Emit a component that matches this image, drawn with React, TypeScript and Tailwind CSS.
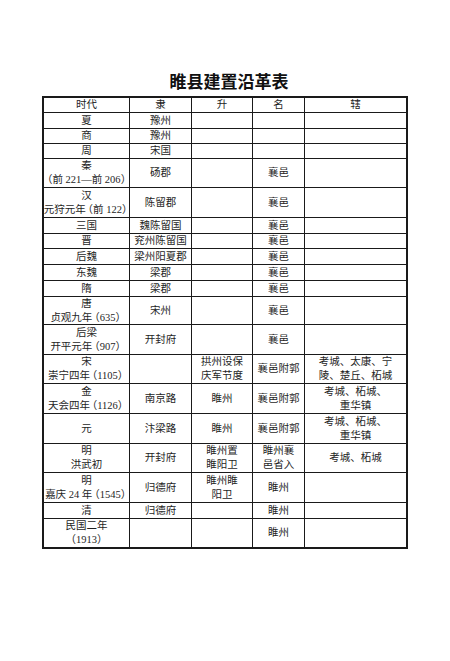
import React from "react";

type Cell = string[];
type Row = { h: number; c: Cell[] };

const rows: Row[] = [
  { h: 16, c: [["夏"], ["豫州"], [], [], []] },
  { h: 15, c: [["商"], ["豫州"], [], [], []] },
  { h: 15, c: [["周"], ["宋国"], [], [], []] },
  { h: 29, c: [["秦", "（前 221—前 206）"], ["砀郡"], [], ["襄邑"], []] },
  { h: 30, c: [["汉", "元狩元年（前 122）"], ["陈留郡"], [], ["襄邑"], []] },
  { h: 16, c: [["三国"], ["魏陈留国"], [], ["襄邑"], []] },
  { h: 15, c: [["晋"], ["兖州陈留国"], [], ["襄邑"], []] },
  { h: 16, c: [["后魏"], ["梁州阳夏郡"], [], ["襄邑"], []] },
  { h: 16, c: [["东魏"], ["梁郡"], [], ["襄邑"], []] },
  { h: 16, c: [["隋"], ["梁郡"], [], ["襄邑"], []] },
  { h: 28, c: [["唐", "贞观九年（635）"], ["宋州"], [], ["襄邑"], []] },
  { h: 30, c: [["后梁", "开平元年（907）"], ["开封府"], [], ["襄邑"], []] },
  {
    h: 29,
    c: [
      ["宋", "崇宁四年（1105）"],
      [],
      ["拱州设保", "庆军节度"],
      ["襄邑附郭"],
      ["考城、太康、宁", "陵、楚丘、柘城"],
    ],
  },
  {
    h: 30,
    c: [["金", "天会四年（1126）"], ["南京路"], ["睢州"], ["襄邑附郭"], ["考城、柘城、", "重华镇"]],
  },
  { h: 30, c: [["元"], ["汴梁路"], ["睢州"], ["襄邑附郭"], ["考城、柘城、", "重华镇"]] },
  {
    h: 29,
    c: [["明", "洪武初"], ["开封府"], ["睢州置", "睢阳卫"], ["睢州襄", "邑省入"], ["考城、柘城"]],
  },
  { h: 30, c: [["明", "嘉庆 24 年（1545）"], ["归德府"], ["睢州睢", "阳卫"], ["睢州"], []] },
  { h: 16, c: [["清"], ["归德府"], [], ["睢州"], []] },
  { h: 28, c: [["民国二年", "（1913）"], [], [], ["睢州"], []] },
];

function Txt({ s }: { s: string }) {
  const parts: React.ReactNode[] = [];
  let buf = "";
  let k = 0;
  for (const ch of s) {
    if (ch === "（" || ch === "）") {
      if (buf) parts.push(<span key={k++}>{buf}</span>);
      buf = "";
      parts.push(
        <span
          key={k++}
          className={`[font-feature-settings:'halt'] ${ch === "（" ? "ml-[2px]" : "mr-[2px]"}`}
        >
          {ch}
        </span>
      );
    } else buf += ch;
  }
  if (buf) parts.push(<span key={k++}>{buf}</span>);
  return <div className="whitespace-nowrap">{parts}</div>;
}

const cols = "grid grid-cols-[86px_62px_61px_52px_101px]";
const header = ["时代", "隶", "升", "名", "辖"];

export default function App() {
  return (
    <div
      className="w-[450px] h-[661px] bg-white text-[#1e1e1e]"
      style={{ fontFamily: '"Liberation Serif", "Noto Sans CJK SC", serif' }}
    >
      <div
        className="pt-[70px] h-[96px] text-center text-[17px] leading-[22px] font-bold text-[#111] pl-[8px]"
        style={{ fontFamily: '"Noto Sans CJK SC", sans-serif' }}
      >
        睢县建置沿革表
      </div>
      <div className="ml-[42px] w-[366px] border-2 border-[#1a1a1a] text-[10.5px] leading-[14px]">
        <div className={`${cols} h-[15px] border-b border-[#1a1a1a]`}>
          {header.map((t, i) => (
            <div
              key={i}
              className={`flex items-center justify-center ${i < 4 ? "border-r border-[#1a1a1a]" : ""}`}
            >
              {t}
            </div>
          ))}
        </div>
        {rows.map((r, ri) => (
          <div
            key={ri}
            className={`${cols} ${ri < rows.length - 1 ? "border-b border-[#1a1a1a]" : ""}`}
            style={{ height: r.h }}
          >
            {r.c.map((cell, ci) => (
              <div
                key={ci}
                className={`flex flex-col items-center justify-center ${
                  ci < 4 ? "border-r border-[#1a1a1a]" : ""
                }`}
              >
                {cell.map((line, li) => (
                  <Txt key={li} s={line} />
                ))}
              </div>
            ))}
          </div>
        ))}
      </div>
    </div>
  );
}
